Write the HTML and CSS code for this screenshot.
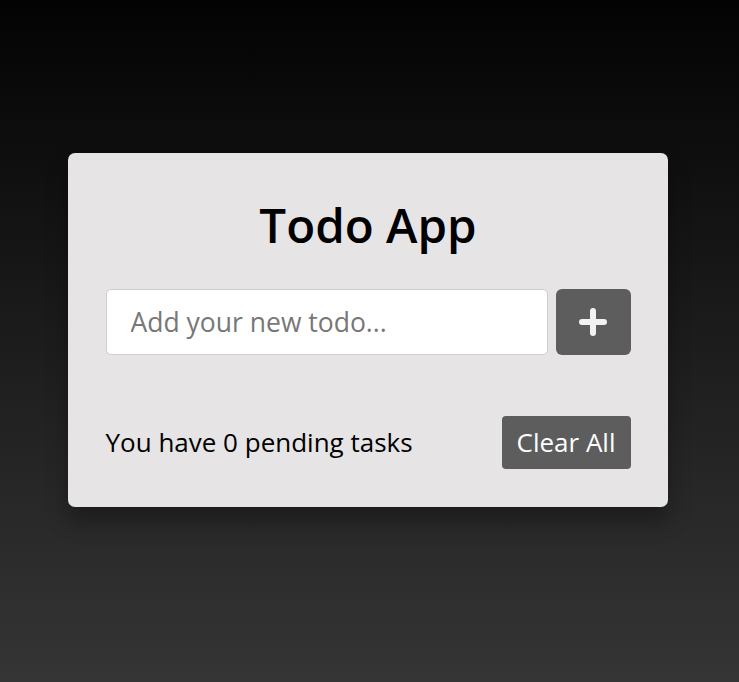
FILE: index.html
```html
<!DOCTYPE html>
<html lang="en">
<head>
<meta charset="utf-8">
<title>Todo App</title>
<link rel="stylesheet" href="styles.css">
</head>
<body>
  <div class="wrapper">
    <h1 class="title">Todo App</h1>
    <div class="input-field">
      <input type="text" class="todo-input" placeholder="Add your new todo...">
      <button class="add-btn" aria-label="Add">
        <svg width="28" height="28" viewBox="0 0 28 28"><path d="M14 3v22M3 14h22" stroke="#f2f2f2" stroke-width="6" stroke-linecap="round" fill="none"/></svg>
      </button>
    </div>
    <ul class="todo-list"></ul>
    <div class="footer">
      <span class="pending">You have 0 pending tasks</span>
      <button class="clear-btn">Clear All</button>
    </div>
  </div>
</body>
</html>
```

FILE: styles.css
```css
* { box-sizing: border-box; }
html, body { margin: 0; padding: 0; }
body {
  min-height: 100vh;
  background: linear-gradient(to bottom, #030303, #353535);
  font-family: "Open Sans", "Liberation Sans", sans-serif;
  padding: 153px 3px 0 0;
}
.wrapper {
  width: 600px;
  margin: 0 auto;
  background: #e6e4e5;
  border-radius: 7px;
  padding: 37.5px 37.5px 38px;
  box-shadow: 0 15px 22px rgba(0, 0, 0, 0.3);
}
.title {
  margin: 0;
  text-align: center;
  font-size: 47.5px;
  font-weight: 600;
  color: #000;
  line-height: 67px;
  height: 67px;
}
.input-field {
  display: flex;
  gap: 8px;
  margin-top: 31px;
  height: 66px;
}
.todo-input {
  flex: 1;
  min-width: 0;
  height: 100%;
  border: 1px solid #cfcdce;
  border-radius: 5px;
  background: #fff;
  padding: 0 22px 0 24px;
  font-family: inherit;
  font-size: 26.5px;
  outline: none;
}
.todo-input::placeholder { color: #777; }
.add-btn {
  width: 75px;
  height: 100%;
  border: none;
  border-radius: 6px;
  background: #5d5d5d;
  display: flex;
  align-items: center;
  justify-content: center;
  padding: 0;
}
.add-btn svg { display: block; }
.todo-list {
  list-style: none;
  margin: 0;
  padding: 0;
  height: 61px;
}
.footer {
  display: flex;
  align-items: center;
  justify-content: space-between;
  height: 53px;
}
.pending {
  font-size: 26px;
  color: #000;
}
.clear-btn {
  height: 53px;
  border: none;
  border-radius: 4px;
  background: #5d5d5d;
  color: #fff;
  font-family: inherit;
  font-size: 26px;
  padding: 0 15px;
}
```
